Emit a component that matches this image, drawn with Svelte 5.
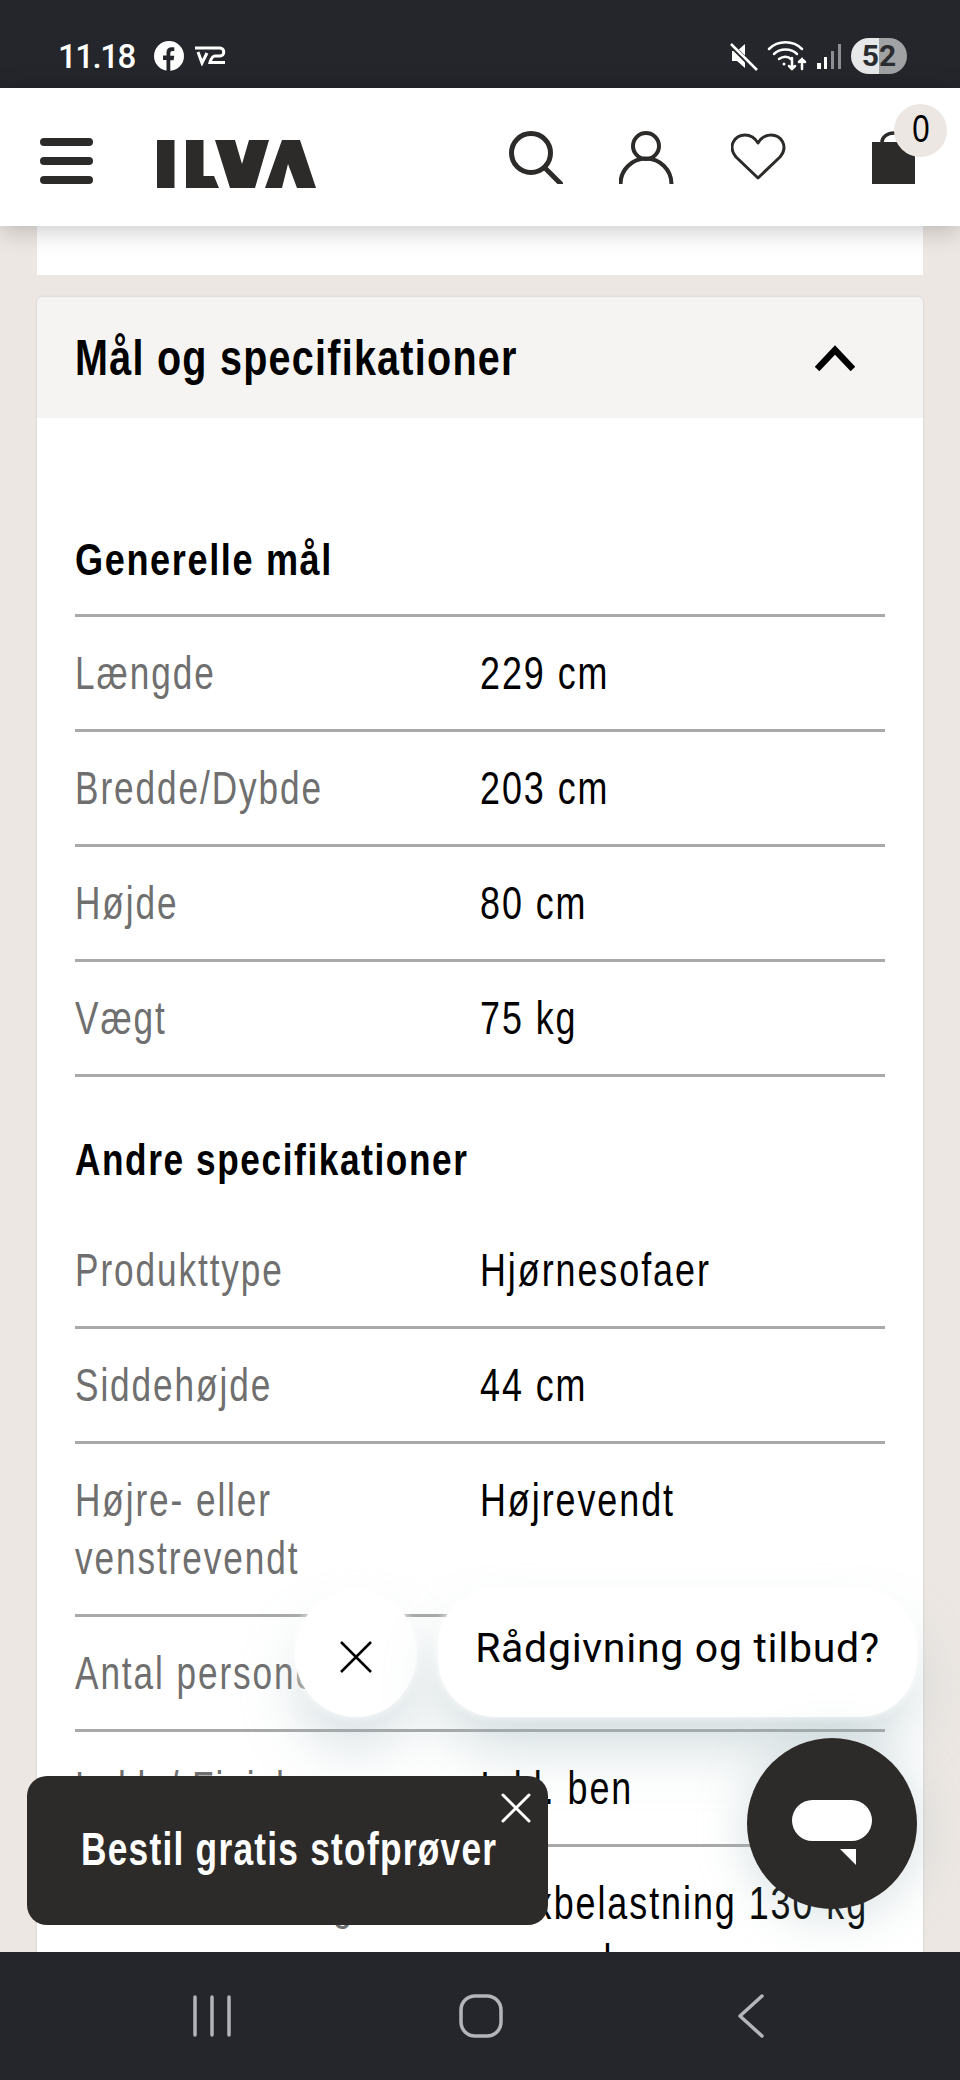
<script lang="ts">
  const general = [
    { label: 'Længde', value: '229 cm' },
    { label: 'Bredde/Dybde', value: '203 cm' },
    { label: 'Højde', value: '80 cm' },
    { label: 'Vægt', value: '75 kg' }
  ];
  const other = [
    { label: 'Produkttype', value: 'Hjørnesofaer' },
    { label: 'Siddehøjde', value: '44 cm' },
    { label: 'Højre- eller venstrevendt', value: 'Højrevendt' },
    { label: 'Antal personer', value: '5' },
    { label: 'Lakk / Finish', value: 'Inkl. ben' },
    { label: 'Siddebelastning', value: 'Maxbelastning 130 kg pr. sæde' }
  ];
</script>

<div class="screen">
  <div class="status">
    <div class="status-left">
      <span class="clock">11.18</span>
      <svg width="30" height="30" viewBox="0 0 30 30"><circle cx="15" cy="15" r="15" fill="#fff" /><path d="M12.500 30V19H9v-4.400h3.500v-3c0-3.600 2-5.400 5.200-5.400 1.300 0 2.600.2 2.600.2v3.700h-1.800c-1.700 0-2.200 1.100-2.200 2.200v2.500h4l-.7 4.400h-3.300v11z" fill="#24262b" /></svg>
      <svg width="31" height="20" viewBox="0 0 31 20" fill="none" stroke="#fff" stroke-width="3"><path d="M0 2h25c5 0 5 8 0 8h-5c-3 0-4 3-5 6.500h15" /><path d="M3 6l4 11 5-10" /></svg>
    </div>
    <div class="status-right">
      <svg width="28" height="30" viewBox="0 0 28 30"><path d="M2 10h5l8-7v24l-8-7H2z" fill="#fff" /><path d="M1 4l25 25" stroke="#24262b" stroke-width="5" /><path d="M1 3l26 26" stroke="#fff" stroke-width="2.500" /></svg>
      <svg width="40" height="32" viewBox="0 0 40 32" fill="none" stroke="#fff" stroke-width="2.500" stroke-linecap="round"><path d="M2 9c9-9 24-9 33 0M7 14c6-6 17-6 23 0M12 19c4-3 9-3 12 0" /><circle cx="17" cy="24" r="1.500" fill="#fff" stroke="none" /><path d="M25 18v11m-3-3l3 3 3-3M35 29V19m-3 3l3-3 3 3" /></svg>
      <svg width="26" height="28" viewBox="0 0 26 28"><rect x="1" y="21" width="4" height="6" fill="#fff" /><rect x="8" y="15" width="3" height="12" fill="#fff" /><rect x="15" y="9" width="3" height="18" fill="#8d8e91" /><rect x="22" y="2" width="3" height="25" fill="#8d8e91" /></svg>
      <span class="battery">52</span>
    </div>
  </div>

  <header class="topbar">
    <div class="burger"><span></span><span></span><span></span></div>
    <svg class="logo" width="159" height="48" viewBox="0 0 159 48" fill="#2d2b29"><path d="M0 0h17.500v48H0zM29 0h17.500v36H57l5 12H29z" /><path d="M58 0h20l7 24 7-24h20L98 48H73z" /><path d="M108 48L125 0h18l16 48h-19l-9-24-6 24z" /></svg>
    <div class="actions">
      <svg width="54" height="53" viewBox="0 0 54 53" fill="none" stroke="#2d2b29" stroke-width="5"><circle cx="22" cy="22" r="19.500" /><path d="M36 37l18 18" /></svg>
      <svg width="56" height="53" viewBox="0 0 56 53" fill="none" stroke="#2d2b29" stroke-width="4"><circle cx="27" cy="15" r="13" /><path d="M1.500 55v-2a25.500 25.500 0 0 1 51 0v2" /></svg>
      <svg width="56" height="48" viewBox="0 0 56 48" fill="none" stroke="#2d2b29" stroke-width="3"><path d="M27 45L5 24C-4 13 4 2 14 2c6 0 10 3 13 8 3-5 7-8 13-8 10 0 18 11 9 22z" stroke-linejoin="round" /></svg>
      <div class="bag">
        <svg width="43" height="53" viewBox="0 0 43 53" fill="#2d2b29"><path d="M10 11a12 9 0 0 1 24 0" fill="none" stroke="#2d2b29" stroke-width="3.500" /><rect x="0" y="11" width="43" height="42" /></svg>
        <span class="count"><span>0</span></span>
      </div>
    </div>
  </header>

  <main class="page">
    <div class="prev-card"></div>
    <section class="card">
      <div class="card-head">
        <h2>Mål og specifikationer</h2>
        <svg width="40" height="26" viewBox="0 0 40 26" fill="none" stroke="#000" stroke-width="6.500"><path d="M2 24L20 5l18 19" /></svg>
      </div>
      <div class="card-body">
        <h3 class="first">Generelle mål</h3>
        <div class="rows ruled">
          {#each general as row}
            <div class="row"><div class="label"><span>{row.label}</span></div><div class="value"><span>{row.value}</span></div></div>
          {/each}
        </div>
        <h3>Andre specifikationer</h3>
        <div class="rows">
          {#each other as row}
            <div class="row"><div class="label"><span>{row.label}</span></div><div class="value"><span>{row.value}</span></div></div>
          {/each}
        </div>
      </div>
    </section>
  </main>

  <nav class="navbar">
    <svg width="40" height="42" viewBox="0 0 40 42" fill="none" stroke="#b4b5b8" stroke-width="3.500" stroke-linecap="round"><path d="M3 2v38M20 2v38M37 2v38" /></svg>
    <svg width="44" height="44" viewBox="0 0 44 44" fill="none" stroke="#b4b5b8" stroke-width="3.500"><rect x="2" y="2" width="40" height="40" rx="14" /></svg>
    <svg class="back" width="28" height="44" viewBox="0 0 28 44" fill="none" stroke="#b4b5b8" stroke-width="3.500" stroke-linecap="round" stroke-linejoin="round"><path d="M25 2L3 22l22 20" /></svg>
  </nav>

  <button class="chat-close" aria-label="Luk">
    <svg width="34" height="34" viewBox="0 0 34 34" stroke="#000" stroke-width="2.500"><path d="M2 2l30 30M32 2L2 32" /></svg>
  </button>
  <div class="chat-bubble">Rådgivning og tilbud?</div>
  <button class="chat-fab" aria-label="Chat">
    <svg width="80" height="66" viewBox="0 0 80 66"><rect x="0" y="0" width="80" height="41" rx="20.500" fill="#fff" /><path d="M48 49h16v16z" fill="#fff" /></svg>
  </button>
  <div class="toast">
    <span>Bestil gratis stofprøver</span>
    <svg class="toast-close" width="30" height="30" viewBox="0 0 30 30" stroke="#fff" stroke-width="3" stroke-linecap="round"><path d="M2 2l26 26M28 2L2 28" /></svg>
  </div>
</div>

<style>
  :global(body) {
    margin: 0;
    background: #ece7e3;
  }

  .screen {
    position: relative;
    width: 960px;
    height: 2080px;
    display: flex;
    flex-direction: column;
    overflow: hidden;
    font-family: "Liberation Sans", sans-serif;
  }

  .status {
    flex: 0 0 88px;
    background: #24262b;
    display: flex;
    justify-content: space-between;
    align-items: center;
    padding: 0 53px 0 58px;
    box-sizing: border-box;
    color: #fff;
  }

  .status-left,
  .status-right {
    display: flex;
    align-items: center;
    gap: 11px;
    padding-top: 24px;
  }

  .status-right {
    gap: 9px;
  }

  .clock {
    font: 500 33px Roboto, sans-serif;
    letter-spacing: -1.5px;
    margin-right: 8px;
  }

  .battery {
    width: 56px;
    height: 36px;
    border-radius: 18px;
    background: linear-gradient(90deg, #e7e8e9 50%, #a1a2a4 50%);
    color: #2a2c30;
    font: 700 30px Roboto, sans-serif;
    text-align: center;
    line-height: 36px;
  }

  .topbar {
    flex: 0 0 138px;
    background: #fff;
    display: flex;
    align-items: center;
    position: relative;
    z-index: 2;
    padding: 0 45px 0 40px;
    box-sizing: border-box;
    box-shadow: 0 4px 24px rgba(0, 0, 0, 0.22);
  }

  .burger {
    width: 53px;
    display: flex;
    flex-direction: column;
    gap: 11px;
    margin-top: 8px;
  }

  .burger span {
    height: 8px;
    border-radius: 4px;
    background: #2d2b29;
  }

  .logo {
    margin: 14px 0 0 64px;
  }

  .actions {
    display: flex;
    align-items: center;
    gap: 56px;
    margin-left: auto;
  }

  .bag {
    position: relative;
    margin-left: 29px;
    height: 53px;
  }

  .count {
    position: absolute;
    left: 22px;
    top: -27px;
    width: 53px;
    height: 53px;
    border-radius: 50%;
    background: #ece7e3;
    color: #000;
    font-size: 39px;
    line-height: 50px;
    text-align: center;
  }

  .count span {
    display: inline-block;
    transform: scaleX(0.8);
  }

  .page {
    flex: 1;
    min-height: 0;
    overflow: hidden;
    padding: 0 37px;
  }

  .prev-card {
    height: 49px;
    background: #fff;
    margin-bottom: 22px;
  }

  .card {
    background: #fff;
    border-radius: 6px 6px 0 0;
    box-shadow: 0 0 3px rgba(0, 0, 0, 0.12);
  }

  .card-head {
    height: 121px;
    background: #f5f4f2;
    border-radius: 6px 6px 0 0;
    display: flex;
    align-items: center;
    justify-content: space-between;
    padding: 0 68px 0 38px;
  }

  h2 {
    margin: 0;
    font-size: 50px;
    font-weight: 700;
    letter-spacing: 1.6px;
    color: #000;
    white-space: nowrap;
    transform: scaleX(0.79);
    transform-origin: left;
  }

  .card-body {
    padding: 0 38px;
  }

  h3 {
    margin: 0;
    font-size: 44px;
    font-weight: 700;
    letter-spacing: 2px;
    color: #000;
    line-height: 48px;
    padding: 59px 0 30px;
    transform: scaleX(0.8);
    transform-origin: left;
  }

  h3.first {
    padding: 118px 0 30px;
    transform: scaleX(0.82);
  }

  .rows.ruled {
    border-top: 3px solid #a9a9a9;
  }

  .row {
    display: flex;
    min-height: 112px;
    border-bottom: 3px solid #a9a9a9;
    font-size: 46px;
    line-height: 58px;
    letter-spacing: 2.5px;
  }

  .label {
    flex: 0 0 405px;
    min-width: 0;
    padding: 27px 0;
    color: #6f6f6f;
  }

  .value {
    flex: 1;
    min-width: 0;
    padding: 27px 0;
    color: #000;
  }

  .label span,
  .value span {
    display: inline-block;
    width: 480px;
    transform: scaleX(0.765);
    transform-origin: left;
  }

  .value span {
    width: 520px;
    transform: scaleX(0.78);
  }

  .chat-close {
    position: absolute;
    left: 295px;
    top: 1590px;
    width: 122px;
    height: 127px;
    border: 0;
    border-radius: 50%;
    background: #fff;
    padding: 6px 0 0;
    display: flex;
    align-items: center;
    justify-content: center;
    box-shadow: 0 0 10px #fff, 0 34px 60px -6px rgba(150, 175, 180, 0.42);
  }

  .chat-bubble {
    position: absolute;
    left: 438px;
    top: 1588px;
    width: 479px;
    height: 129px;
    border-radius: 58px;
    background: #fff;
    color: #000;
    font: 400 41px/120px Roboto, sans-serif;
    letter-spacing: 0.7px;
    text-align: center;
    box-shadow: 0 0 10px #fff, 0 34px 60px -6px rgba(150, 175, 180, 0.45);
  }

  .chat-fab {
    position: absolute;
    left: 747px;
    top: 1738px;
    width: 170px;
    height: 171px;
    border: 0;
    border-radius: 50%;
    background: #2d2b29;
    padding: 18px 0 0;
    display: flex;
    align-items: center;
    justify-content: center;
    box-shadow: 0 6px 50px rgba(150, 175, 180, 0.4);
  }

  .toast {
    position: absolute;
    left: 27px;
    top: 1776px;
    width: 521px;
    height: 149px;
    border-radius: 20px;
    background: #2d2b29;
    color: #fff;
    font-size: 46px;
    font-weight: 700;
    letter-spacing: 1.6px;
    display: flex;
    align-items: center;
    padding: 0 0 4px 54px;
    box-sizing: border-box;
  }

  .toast span {
    white-space: nowrap;
    transform: scaleX(0.768);
    transform-origin: left;
  }

  .toast-close {
    position: absolute;
    right: 17px;
    top: 17px;
  }

  .navbar {
    flex: 0 0 128px;
    background: #24262b;
    position: relative;
    z-index: 2;
    display: flex;
    align-items: center;
    gap: 227px;
    padding: 0 0 0 192px;
    box-sizing: border-box;
  }

  .navbar .back {
    margin-left: 7px;
  }
</style>
